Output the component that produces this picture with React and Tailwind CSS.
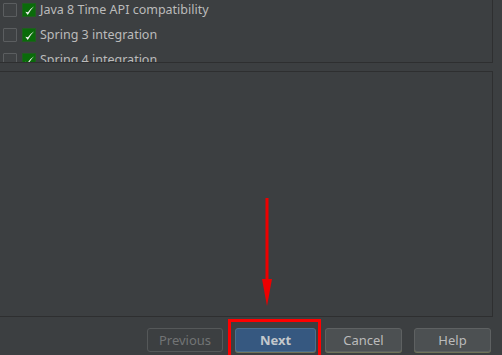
import React from "react";

const items = [
  "Java 8 Time API compatibility",
  "Spring 3 integration",
  "Spring 4 integration",
];

function GreenCheck() {
  return (
    <div className="w-[14px] h-[14px] bg-[#0a6b0a] border border-[#1f5e1f] flex items-center justify-center">
      <svg width="11" height="11" viewBox="0 0 10 10">
        <path d="M1.2 6.2 L3.4 9 Q6 4.5 9.2 1.2 Q5.5 3.5 3.6 6.6 Z" fill="#f2f2f2" />
      </svg>
    </div>
  );
}

function Row({ text }) {
  return (
    <div className="flex items-start h-[25px] pl-[3px] pt-[3px] shrink-0">
      <div className="w-[14px] h-[14px] border border-[#5b5e60] bg-[#3f4244] rounded-[1px]" />
      <div className="ml-[5px]">
        <GreenCheck />
      </div>
      <span className="ml-[4px] text-[12.5px] text-[#bbbbbb] leading-[14px]">{text}</span>
    </div>
  );
}

export default function App() {
  return (
    <div
      className="relative w-[502px] h-[355px] bg-[#3c3f41] overflow-hidden flex flex-col"
      style={{ fontFamily: '"Noto Sans", "Open Sans", sans-serif' }}
    >
      <div className="w-[493px] h-[63px] border-r border-b border-[#2e2f30] overflow-hidden flex flex-col">
        {items.map((t) => (
          <Row key={t} text={t} />
        ))}
      </div>

      <div className="mt-[8px] w-[493px] h-[246px] border-t border-r border-b border-[#2e2f30]" />

      <div className="flex items-start mt-[11px] pl-[147px]">
        <button className="w-[76px] h-[24px] rounded-[3px] border border-[#555859] text-[13px] text-[#727475] leading-none">
          Previous
        </button>
        <button className="ml-[12px] w-[81px] h-[24px] rounded-[3px] border border-[#4a6f8f] bg-[#365880] text-[13px] font-bold text-[#c3c8cc] leading-none shadow-[0_1px_0_#6f7358]">
          Next
        </button>
        <button className="ml-[9px] w-[77px] h-[24px] rounded-[3px] border border-[#5e6162] bg-[#4c5052] text-[13px] text-[#bbbbbb] leading-none shadow-[0_1px_0_#6f7358]">
          Cancel
        </button>
        <button className="ml-[12px] w-[77px] h-[24px] rounded-[3px] border border-[#5e6162] bg-[#4c5052] text-[13px] text-[#bbbbbb] leading-none shadow-[0_1px_0_#6f7358]">
          Help
        </button>
      </div>

      <div className="absolute left-[228px] top-[319px] w-[93px] h-[50px] border-[3px] border-[#ff0000]" />

      <svg className="absolute left-[255px] top-[195px]" width="24" height="115" viewBox="0 0 24 115">
        <line x1="12" y1="3" x2="12" y2="90" stroke="#ee0000" strokeWidth="3" />
        <path d="M7 84 L17 84 L12 111 Z" fill="#ee0000" />
      </svg>
    </div>
  );
}
